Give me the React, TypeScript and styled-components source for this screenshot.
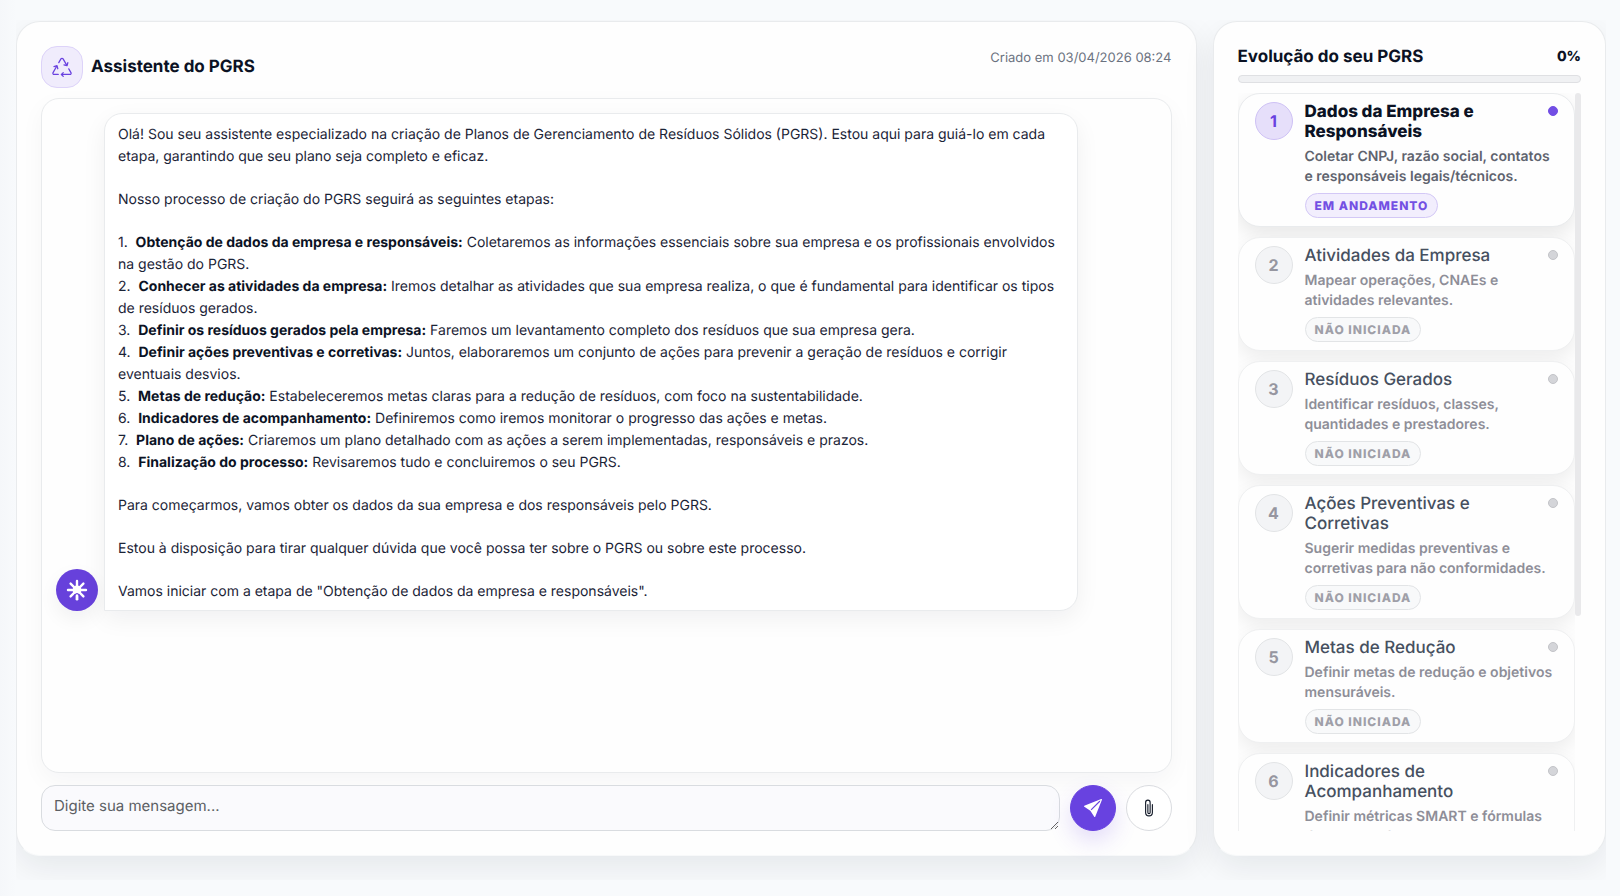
import React, { useEffect, useRef, useState } from 'react';
import styled, { createGlobalStyle, css } from 'styled-components';
import { BsPaperclip, BsRecycle, BsSendFill } from 'react-icons/bs';

const GlobalStyle = createGlobalStyle`
  *, *::before, *::after { box-sizing: border-box; }
  body {
    margin: 0;
    background: #f8fafc;
    color: #0f172a;
    font-family: Inter, "Liberation Sans", sans-serif;
    font-size: 14px;
    text-rendering: geometricPrecision;
  }
  h1, h2, h3, p, ol { margin: 0; padding: 0; }
`;

const Page = styled.div`
  height: 100vh;
  padding: 20px 14px 16px 16px;
  background: linear-gradient(90deg, #f5f7fa 0, #f8fafc 16px);
`;

const Layout = styled.main`
  display: grid;
  grid-template-columns: minmax(0, 3fr) minmax(0, 1fr);
  gap: 16px;
  height: 100%;
  padding: 1px 0 24px;
  overflow: hidden;
`;

const Card = styled.section`
  display: flex;
  flex-direction: column;
  min-height: 0;
  padding: 24px;
  border: 1px solid #e9ebed;
  border-bottom-color: #f8f9fa;
  border-radius: 24px;
  background: #fefefe;
  box-shadow: 0 12px 32px rgba(15, 23, 42, 0.08);
`;

const ChatHeader = styled.header`
  display: flex;
  align-items: flex-start;
  justify-content: space-between;
  margin-bottom: 10px;
`;

const Brand = styled.div`
  display: flex;
  align-items: center;
  gap: 8px;
`;

const BrandIcon = styled.span`
  display: grid;
  place-items: center;
  width: 42px;
  height: 42px;
  border: 1px solid #ddd3f9;
  border-radius: 16px;
  background: #f0ecfc;
  color: #6941df;
  font-size: 20px;
`;

const Title = styled.h1`
  font-size: 17px;
  font-weight: 700;
  line-height: 22px;
  color: #0b1224;
`;

const CreatedAt = styled.span`
  font-size: 13px;
  line-height: 24px;
  color: #6b7280;
`;

const Messages = styled.div`
  flex: 1;
  min-height: 0;
  padding: 14px;
  border: 1px solid #e9ebed;
  border-radius: 18px;
  background: #fefefe;
  box-shadow: 0 8px 24px rgba(15, 23, 42, 0.04);
`;

const MessageRow = styled.article`
  display: flex;
  align-items: flex-end;
  gap: 6px;
`;

const Avatar = styled.span`
  display: grid;
  flex: none;
  place-items: center;
  width: 42px;
  height: 42px;
  border-radius: 50%;
  background: #6741db;
  box-shadow: 0 8px 20px rgba(15, 23, 42, 0.06);
`;

const Bubble = styled.div`
  display: flex;
  flex-direction: column;
  gap: 21px;
  max-width: 974px;
  padding: 10px 13px 7px;
  border: 1px solid #e9ebed;
  border-radius: 18px 18px 18px 0;
  background: #fff;
  box-shadow: 0 8px 24px rgba(15, 23, 42, 0.06);
  font-size: 14px;
  line-height: 22px;
  color: #1b2437;
`;

const StageList = styled.ol`
  list-style: none;

  strong { font-weight: 700; color: #0b1224; }
`;

const Composer = styled.form`
  display: flex;
  gap: 10px;
  margin-top: 12px;
`;

const MessageInput = styled.textarea`
  flex: 1;
  min-width: 0;
  height: 46px;
  padding: 9px 12px;
  border: 1px solid #d9dce0;
  border-radius: 14px;
  background: #fafafd;
  font-family: inherit;
  font-size: 15px;
  line-height: 22px;
  text-rendering: inherit;
  resize: vertical;
  overflow: hidden;

  &::placeholder { color: #5c5f64; }
`;

const RoundButton = styled.button<{ $primary?: boolean }>`
  display: grid;
  flex: none;
  place-items: center;
  width: 46px;
  height: 46px;
  padding: 0;
  border: 1px solid #dadce0;
  border-radius: 50%;
  background: #fff;
  color: #111827;
  font-size: 18px;
  ${(p) => p.$primary && css`
    border-color: #6842e0;
    background: #6842e0;
    color: #fff;
    box-shadow: 0 10px 22px rgba(104, 66, 224, 0.18);
  `}
`;

const ProgressHeader = styled.header`
  display: flex;
  align-items: center;
  justify-content: space-between;
  margin-bottom: 7px;
  line-height: 22px;
`;

const Percent = styled.span`
  font-size: 14px;
  font-weight: 800;
  color: #0b1224;
`;

const ProgressTrack = styled.div`
  flex: none;
  height: 8px;
  margin-bottom: 10px;
  border: 1px solid #dfe0e3;
  border-radius: 4px;
  background: #f0f1f3;
`;

const StepsArea = styled.div`
  display: flex;
  flex: 1;
  min-height: 0;
`;

const Steps = styled.ol`
  display: flex;
  flex: 1;
  flex-direction: column;
  gap: 10px;
  min-width: 0;
  overflow-x: hidden;
  overflow-y: auto;
  list-style: none;
  scrollbar-width: none;
`;

const ScrollRail = styled.div`
  flex: none;
  width: 6px;
`;

const ScrollThumb = styled.div`
  border-radius: 3px;
  background: #e9e9eb;
`;

const StepItem = styled.li<{ $active: boolean }>`
  position: relative;
  display: flex;
  flex: none;
  align-items: flex-start;
  gap: 12px;
  padding: 8px 16px;
  border: 1px solid ${(p) => (p.$active ? '#e9ebed' : '#eff0f1')};
  border-radius: 22px;
  background: #fefefe;
  box-shadow: 0 8px 20px rgba(0, 0, 0, ${(p) => (p.$active ? 0.09 : 0.07)});
`;

const StepNumber = styled.span<{ $active: boolean }>`
  display: grid;
  flex: none;
  place-items: center;
  width: 38px;
  height: 38px;
  border: 1px solid ${(p) => (p.$active ? '#cec1f5' : '#e2e4e6')};
  border-radius: 50%;
  background: ${(p) => (p.$active ? '#e6dffa' : '#f3f4f6')};
  color: ${(p) => (p.$active ? '#6842e0' : '#9696a0')};
  font-size: 16px;
  font-weight: 700;
`;

const StepBody = styled.div`
  flex: 1;
  min-width: 0;
`;

const StepTitle = styled.h3<{ $active: boolean }>`
  font-size: 17px;
  font-weight: ${(p) => (p.$active ? 800 : 500)};
  line-height: 20px;
  color: ${(p) => (p.$active ? '#0b1224' : '#465060')};
`;

const StepText = styled.p<{ $active: boolean }>`
  margin: 5px 0 6px;
  font-size: 14px;
  font-weight: 600;
  line-height: 20px;
  color: ${(p) => (p.$active ? '#5f636e' : '#8e8e98')};
`;

const StepStatus = styled.span<{ $active: boolean }>`
  display: block;
  width: fit-content;
  height: 25px;
  padding: 0 9px;
  border: 1px solid ${(p) => (p.$active ? '#d3c8f6' : '#e2e4e6')};
  border-radius: 13px;
  background: ${(p) => (p.$active ? '#f2eefd' : '#f8f9fa')};
  color: ${(p) => (p.$active ? '#7350e3' : '#9f9fa8')};
  font-size: 12px;
  font-weight: 800;
  letter-spacing: 1px;
  line-height: 23px;
  text-transform: uppercase;
`;

const StepDot = styled.span<{ $active: boolean }>`
  position: absolute;
  top: 12px;
  right: 16px;
  width: 10px;
  height: 10px;
  border: 1px solid ${(p) => (p.$active ? '#724ee4' : '#c3c4c8')};
  border-radius: 50%;
  background: ${(p) => (p.$active ? '#724ee4' : '#d4d5d9')};
`;

const stages = [
  ['Obtenção de dados da empresa e responsáveis:', 'Coletaremos as informações essenciais sobre sua empresa e os profissionais envolvidos na gestão do PGRS.'],
  ['Conhecer as atividades da empresa:', 'Iremos detalhar as atividades que sua empresa realiza, o que é fundamental para identificar os tipos de resíduos gerados.'],
  ['Definir os resíduos gerados pela empresa:', 'Faremos um levantamento completo dos resíduos que sua empresa gera.'],
  ['Definir ações preventivas e corretivas:', 'Juntos, elaboraremos um conjunto de ações para prevenir a geração de resíduos e corrigir eventuais desvios.'],
  ['Metas de redução:', 'Estabeleceremos metas claras para a redução de resíduos, com foco na sustentabilidade.'],
  ['Indicadores de acompanhamento:', 'Definiremos como iremos monitorar o progresso das ações e metas.'],
  ['Plano de ações:', 'Criaremos um plano detalhado com as ações a serem implementadas, responsáveis e prazos.'],
  ['Finalização do processo:', 'Revisaremos tudo e concluiremos o seu PGRS.'],
];

const steps = [
  ['Dados da Empresa e Responsáveis', 'Coletar CNPJ, razão social, contatos e responsáveis legais/técnicos.'],
  ['Atividades da Empresa', 'Mapear operações, CNAEs e atividades relevantes.'],
  ['Resíduos Gerados', 'Identificar resíduos, classes, quantidades e prestadores.'],
  ['Ações Preventivas e Corretivas', 'Sugerir medidas preventivas e corretivas para não conformidades.'],
  ['Metas de Redução', 'Definir metas de redução e objetivos mensuráveis.'],
  ['Indicadores de Acompanhamento', 'Definir métricas SMART e fórmulas de acompanhamento.'],
  ['Plano de Ações', 'Detalhar ações, responsáveis, prazos e recursos.'],
  ['Finalização', 'Revisar as informações e concluir o documento.'],
];

const AssistantMark = () => (
  <svg width="22" height="22" viewBox="0 0 22 22" fill="none" aria-hidden="true">
    <g stroke="#fff" strokeWidth="2.4" strokeLinecap="round">
      <path d="M11 2V11M2 11h18M4.600 4.600 11 11l6.400-6.400M4.600 17.400 11 11l6.400 6.400" />
    </g>
    <circle cx="11" cy="11" r="4.400" fill="#fff" />
    <path d="M8.800 17.500v-.800a2.200 2.200 0 0 1 4.400 0v.800" stroke="#6741db" strokeWidth="1" />
    <path d="M11 17V20.200" stroke="#fff" strokeWidth="2.800" strokeLinecap="round" />
  </svg>
);

const StepList = () => {
  const listRef = useRef<HTMLOListElement>(null);
  const [thumb, setThumb] = useState({ top: 0, height: 0 });

  const measure = () => {
    const el = listRef.current;
    if (!el) return;
    const ratio = el.clientHeight / el.scrollHeight;
    setThumb({
      top: Math.round(el.scrollTop * ratio),
      height: ratio < 1 ? Math.round(el.clientHeight * ratio) : 0,
    });
  };

  useEffect(() => {
    measure();
    window.addEventListener('resize', measure);
    return () => window.removeEventListener('resize', measure);
  }, []);

  return (
    <StepsArea>
      <Steps ref={listRef} onScroll={measure}>
        {steps.map(([name, text], i) => {
          const active = i === 0;
          return (
            <StepItem key={name} $active={active}>
              <StepNumber $active={active}>{i + 1}</StepNumber>
              <StepBody>
                <StepTitle $active={active}>{name}</StepTitle>
                <StepText $active={active}>{text}</StepText>
                <StepStatus $active={active}>{active ? 'Em andamento' : 'Não iniciada'}</StepStatus>
              </StepBody>
              <StepDot $active={active} />
            </StepItem>
          );
        })}
      </Steps>
      <ScrollRail aria-hidden="true">
        <ScrollThumb style={{ height: thumb.height, marginTop: thumb.top }} />
      </ScrollRail>
    </StepsArea>
  );
};

export default function App() {
  return (
    <Page>
      <GlobalStyle />
      <Layout>
        <Card>
          <ChatHeader>
            <Brand>
              <BrandIcon><BsRecycle aria-hidden="true" /></BrandIcon>
              <Title>Assistente do PGRS</Title>
            </Brand>
            <CreatedAt>Criado em 03/04/2026 08:24</CreatedAt>
          </ChatHeader>
          <Messages>
            <MessageRow>
              <Avatar><AssistantMark /></Avatar>
              <Bubble>
                <p>Olá! Sou seu assistente especializado na criação de Planos de Gerenciamento de Resíduos Sólidos (PGRS). Estou aqui para guiá-lo em cada etapa, garantindo que seu plano seja completo e eficaz.</p>
                <p>Nosso processo de criação do PGRS seguirá as seguintes etapas:</p>
                <StageList>
                  {stages.map(([name, text], i) => (
                    <li key={name}>{`${i + 1}.\u00a0 `}<strong>{name}</strong> {text}</li>
                  ))}
                </StageList>
                <p>Para começarmos, vamos obter os dados da sua empresa e dos responsáveis pelo PGRS.</p>
                <p>Estou à disposição para tirar qualquer dúvida que você possa ter sobre o PGRS ou sobre este processo.</p>
                <p>Vamos iniciar com a etapa de "Obtenção de dados da empresa e responsáveis".</p>
              </Bubble>
            </MessageRow>
          </Messages>
          <Composer onSubmit={(e) => e.preventDefault()}>
            <MessageInput aria-label="Mensagem" placeholder="Digite sua mensagem..." rows={1} />
            <RoundButton $primary type="submit" aria-label="Enviar"><BsSendFill aria-hidden="true" /></RoundButton>
            <RoundButton type="button" aria-label="Anexar arquivo"><BsPaperclip aria-hidden="true" /></RoundButton>
          </Composer>
        </Card>
        <Card>
          <ProgressHeader>
            <Title as="h2">Evolução do seu PGRS</Title>
            <Percent>0%</Percent>
          </ProgressHeader>
          <ProgressTrack role="progressbar" aria-valuenow={0} aria-valuemin={0} aria-valuemax={100} aria-label="Evolução" />
          <StepList />
        </Card>
      </Layout>
    </Page>
  );
}
